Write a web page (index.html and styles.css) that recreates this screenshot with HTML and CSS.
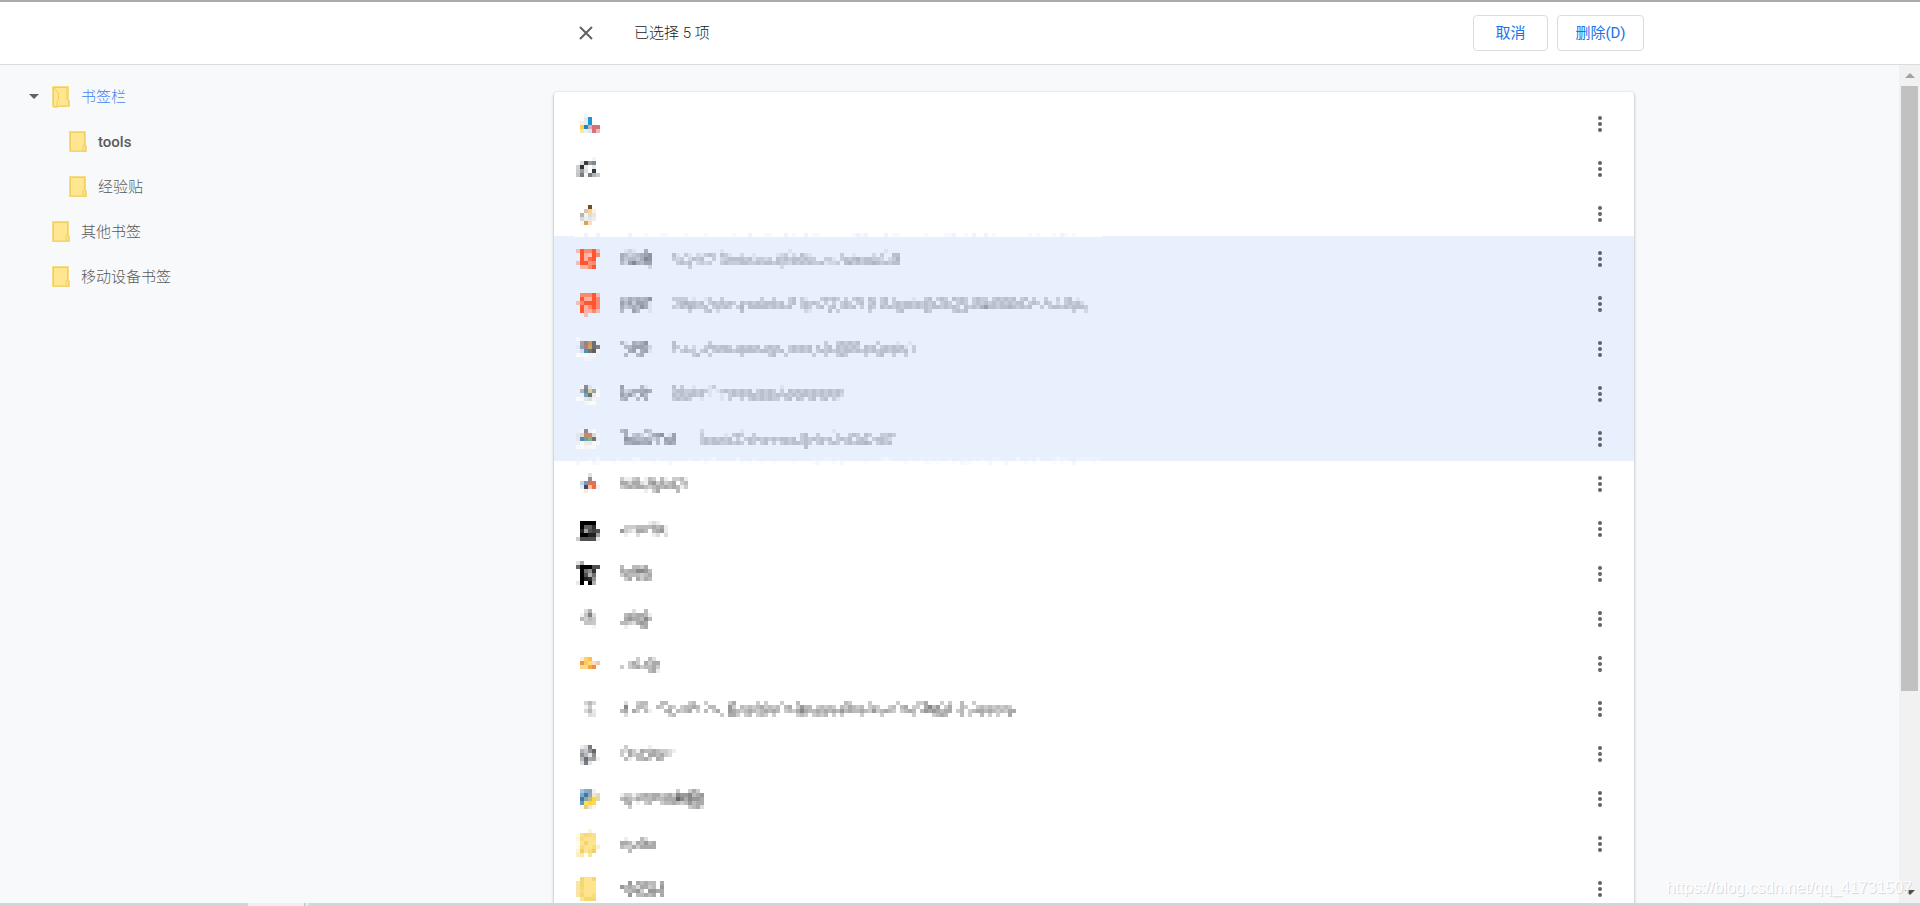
FILE: index.html
```html
<!DOCTYPE html>
<html lang="zh-CN">
<head>
<meta charset="utf-8">
<title>书签</title>
<link rel="stylesheet" href="styles.css">
</head>
<body>
<svg class="defs" aria-hidden="true">
  <symbol id="folder" viewBox="0 0 18 22">
    <path class="folder-halo" d="M0 0h17v14l1 1v6H0z"/>
    <path class="folder-face" d="M1.500 1.500h14v12.500l1 1v5h-15z"/>
    <rect class="folder-face" x="14" y="14" width="2.500" height="6" rx="1"/>
  </symbol>
  <symbol id="folder-open" viewBox="0 0 18 22">
    <path class="folder-halo" d="M0 0h17v13l1 1v7H6l-1 1H3l-3-1z"/>
    <path class="folder-face" d="M1.500 1.500h13.500v12l1.500 1.500v5h-15z"/>
    <path class="folder-face" d="M1.500 2l3.500 3 1.500 3v6l-1.500 1.500V20l-1 1-2.500-1.500z"/>
  </symbol>
</svg>
<header class="toolbar">
  <div class="toolbar-inner">
    <button class="icon-button close" aria-label="关闭">
      <svg width="14" height="14" viewBox="0 0 14 14" aria-hidden="true"><path d="M1 1l12 12M13 1L1 13"/></svg>
    </button>
    <span class="selection-count">已选择 5 项</span>
    <button class="action">取消</button>
    <button class="action">删除(D)</button>
  </div>
</header>
<div class="content">
  <nav class="tree" aria-label="文件夹">
    <a class="node current" href="#"><span class="arrow"></span><svg class="folder"><use href="#folder-open"/></svg>书签栏</a>
    <a class="node child latin" href="#"><span class="arrow none"></span><svg class="folder"><use href="#folder"/></svg>tools</a>
    <a class="node child" href="#"><span class="arrow none"></span><svg class="folder"><use href="#folder"/></svg>经验贴</a>
    <a class="node" href="#"><span class="arrow none"></span><svg class="folder"><use href="#folder"/></svg>其他书签</a>
    <a class="node" href="#"><span class="arrow none"></span><svg class="folder"><use href="#folder"/></svg>移动设备书签</a>
  </nav>
  <main class="list-area">
    <ul class="card" id="list"></ul>
  </main>
  <div class="scrollbar" aria-hidden="true">
    <span class="cap up"></span>
    <div class="track"><div class="thumb"></div></div>
    <span class="cap down"></span>
  </div>
</div>
<footer class="edge"><span class="edge-tab"></span><span class="edge-mark"></span></footer>
<div class="watermark">https://blog.csdn.net/qq_41731507</div>
<script src="script.js"></script>
</body>
</html>
```
FILE: styles.css
```css
* { box-sizing: border-box; }

body {
  margin: 0;
  height: 100vh;
  display: flex;
  flex-direction: column;
  overflow: hidden;
  position: relative;
  background: #f8f9fb;
  font: 15px/20px Roboto, "Noto Sans CJK SC", sans-serif;
  color: #5a5a5a;
}

button { font: inherit; background: none; border: 0; padding: 0; }

.defs { position: absolute; width: 0; height: 0; }
.folder-halo { fill: #f7dd86; }
.folder-face { fill: #ffe791; stroke: #f0cd5c; stroke-width: 1; }

.toolbar {
  flex: none;
  height: 65px;
  border-top: 2px solid #aba9ae;
  border-bottom: 1px solid #dadce0;
  background: #fff;
  padding: 0 21px 0 299px;
  display: flex;
}
.toolbar-inner {
  width: 100%;
  max-width: 1090px;
  margin: 0 auto;
  display: flex;
  align-items: center;
  gap: 9px;
}
.icon-button {
  flex: none;
  display: flex;
  align-items: center;
  justify-content: center;
  width: 44px;
  height: 36px;
}
.close { margin-left: 10px; }
.close path { stroke: #5f6368; stroke-width: 2; fill: none; }
.selection-count { flex: 1; padding-left: 17px; color: #202124; font-weight: 300; }
.action {
  height: 36px;
  padding: 0 17px;
  min-width: 75px;
  border: 1px solid #dadce0;
  border-radius: 4px;
  color: #1a73e8;
}
.action:last-child { min-width: 87px; }

.content { flex: 1; min-height: 0; display: flex; }

.tree { flex: none; width: 289px; padding-top: 9px; }
.node {
  display: flex;
  align-items: center;
  height: 45px;
  padding-left: 29px;
  color: #5a5a5a;
  font-weight: 300;
  text-decoration: none;
}
.node.latin { font-weight: 500; }
.node.child { padding-left: 46px; }
.node.current { color: #4285f4; }
.arrow {
  width: 10px;
  margin-right: 13px;
  border: 5px solid transparent;
  border-top-color: #5f6368;
  border-bottom: 0;
}
.arrow.none { visibility: hidden; }
.folder { width: 18px; height: 22px; margin-right: 11px; }

.list-area { flex: 1; min-width: 0; overflow: hidden; padding-top: 27px; }
.card {
  list-style: none;
  max-width: 1080px;
  margin: 0 auto;
  padding: 9px 0;
  background: #fff;
  border-radius: 4px;
  box-shadow: 0 1px 2px 0 rgba(60, 64, 67, .3), 0 1px 3px 1px rgba(60, 64, 67, .15);
}
.row {
  display: flex;
  align-items: center;
  height: 45px;
  padding: 0 12px 0 22px;
}
.row.selected { background: #e8effd; }
.mosaic { flex: 1; min-width: 0; height: 45px; overflow: visible; shape-rendering: crispEdges; }
.menu circle { fill: #5f6368; }

.scrollbar {
  flex: none;
  width: 21px;
  background: #f1f1f1;
  display: flex;
  flex-direction: column;
  align-items: center;
}
.cap { flex: none; display: flex; height: 21px; align-items: center; }
.cap::before { content: ""; border: 5px solid transparent; }
.up::before { border-top: 0; border-bottom-color: #a3a3a3; }
.down::before { border-bottom: 0; border-top-color: #505050; }
.track { flex: 1; width: 17px; }
.thumb { height: 76%; background: #c1c1c1; }

.edge { flex: none; height: 3px; background: #d0d7da; display: flex; padding-left: 248px; }
.edge-tab { width: 57px; background: #eeeff0; border-right: 1px solid #b9c2c4; }
.edge-mark { width: 4px; background: #e0e5e6; }

.watermark {
  position: absolute;
  right: 8px;
  bottom: 8px;
  font: 16px/20px "Liberation Sans", sans-serif;
  color: #fff;
  text-shadow: 1px 1px 0 #d8dadd;
}
```
FILE: script.js
```js
// Pixelated bookmark rows. Every cell is 4px; `icon` and `text` start at their
// own y inside the row. Icon cells are hex colours ("-" is empty), text cells
// are digits giving the ink strength in tenths ("." is empty).
const CELL = 4;

const rows = [
  { icon: [12, "- - f0f7fc", "- f9fcfe dceefa 1b95d3", "- fdf0cf e0eff5 1b95d3 fafafa", "- f9cf55 1b85c8 d9a9b9 d96f78 d96f78", "- fde5a0 eef1e4 d5e6f7 d96f78 eab8bf"] },
  { icon: [11, "- - - - f4f4f4", "- dcdcdf 3b3b44 98999d 85868b", "cfd0d2 2d3136 ececee - e4eae8", "cacbcf 9b9ca3 e0dede - 2f383a", "c4c7c9 777c80 f7f7f7 7a7e82 b0b4b7 c8cacb"] },
  { icon: [14, "- - - 6b4f2e", "- - d5c6b5 ffd08a fff0da", "- b5b5b6 f2f2f1 dddcd9 e6e6e5", "- dadada eeedeb e9e6e2 eeeeec", "- f8f8f8 d9a555 fcdfb5"] },
  { selected: true, edge: "top",
    icon: [13, "f0bdbb ff5530 f98a70 f98a70 ff5530 f4b5ad", "- ff5530 ffb0a0 ffc0b4 ff5530 f98a70", "- ff5530 ffb0a0 ff6a48 ff5530", "f0bdbb ff5530 ff5530 ff9078 f98a70", "- f4b5ad ffb0a0 f98a70 ff5530"],
    text: [
      [11, 13, ".121..5.", "54234567", "53443587", "42685466", ".......2"],
      [24, 13,
        "............1................1.......................1...",
        "41.31.21343.431..2..1.....123.2.421.......3..1....2.3..44",
        "323.2434..3.2344443413323.4343443433..331.34345344332.235",
        ".3434.2323..343334433434434332434343341223.45343445434344",
        "....3......................2............................."] ] },
  { selected: true,
    icon: [12, "- f98a70 f98a70 f98a70 ff5530 f4b5ad", "- ff5530 ffb0a0 ffb0a0 ff5530 f98a70", "f0bdbb f98a70 ff5530 ff5530 ff5530 f98a70", "- ff5530 ffb0a0 f98a70 ff5530 f98a70", "- ff5530 f4b5ad ffb0a0 f98a70 f4b5ad", "- - f0bdbb"],
    text: [
      [11, 16, "43545457", "64636651", "53454751", "4..64..1"],
      [24, 16,
        "3333.1..13..3.........3..3...34.31...34343.3.343.43.34.3....1..34.343.4343.3433.343434.34.3..3..3.34.1..",
        ".3454434.3434343.43434344434.34.34343.3.3.343.34.34.34.34344343434.343.343.3434343434344.343.43.2.34342.",
        "324354334.34343.35.44444343434..343.34.34.3434.3.43.43434344343434434343.43435744344543434..3.3443434443",
        "....3...34.2.....4...............21....4.3.......3......34.....43.....3434..........................3..2"] ] },
  { selected: true,
    icon: [11, "f2f6fe", "- a0a2a8 9b8083 c59a62 6e6e6e", "e3e8f2 8d9db4 b27a82 c4a75c 6e6e6e 808080", "- d5dde8 3d9bb8 707478 606060 f4f6fa", "fafbfd f8f8f8 fafafa f4f4f6 f6f6f6", "- - f0f4fd f0f4fd"],
    text: [
      [11, 15, "41.5457.", ".4466652", "..56.561", ".4..45.."],
      [24, 15,
        "4........3............................3..343434....3....1..1.",
        "43.3.2..3443443.343434.3434..343434.4.34.434343.434.3434341.3",
        "3.3433.34.343443444443443434.343434.34343434434343434434434.3",
        ".....34..3.......3......34..3......3..3..343....3..34..3..3.."] ] },
  { selected: true,
    icon: [14, "- f2f4f8 93888e dde2ea", "- b0b4bc 67889a d4cf9c a0a39d f4f5f7", "- eef2f7 78a3be 6e7479 e8eaee fafafa", "fafbfd f6f6f8 e6e6e6 dcdde0 f4f4f4", "- - f0f4fb fafafa fafafa"],
    text: [
      [11, 14, "6....41.", "52355565", "6463.64.", "45..4.5."],
      [24, 14,
        "4.3..1...13................1...............",
        "3443343431.134343434.34343.3.43434343434343",
        "43434434.1..1.34343443434343434344343434342",
        "34343..1....1.3..3.34343433.34.43.34.34.31."] ] },
  { selected: true, edge: "bottom",
    icon: [13, "- f4f5f8 93888e eef1f6 fafafa", "dfe5ea d8dade c98a68 c98a68 d9dcd0 f4f4f6", "e3e8ec 5c86b4 68a0a5 7fb48e 707474", "- f7f7f7 ececee e8e8ea fafafa f8f8f8", "fafafa fafafa f4f4f6 f8f8fa f8f8fa"],
    text: [
      [11, 13, "45....43......", ".5.342.2567.16", ".765445424.656", ".5566556.4.565"],
      [31, 13,
        "2.........1......................1...............",
        "3.....1.343..3...........34..3....3..343.43..3343",
        "34343434.3.3434343434434.34343434.3434.343.34432.",
        "34344334343.43.34.3.34344343.34.343.3434454.3434.",
        "..........................4......................"] ] },
  { icon: [12, "- - - e8e0df", "- - - 8f8f9e", "- c2d3e4 7a96b5 e07050 e8704c", "- e3e9ef 484668 f0c4a8 e8704c fbf0f0", "- - fdebd8"],
    text: [[11, 16, "31134.143.41.3341", "55355215635345.34", "34545543454545413", "......1.35....4.."]] },
  { icon: [15, "- 000000 000000 000000 000000", "- 000000 606060 606060 303030", "- 202020 a0a0a0 505050 404040 505050", "- 000000 000000 202020 202020 a0a0a0", "cccccc 505050 505050 505050 505050 e8e8e8"],
    text: [[11, 15, ".......121..", ".33344445451", "6321554.4561", ".1..2...12.2"]] },
  { icon: [10, "e4e4e4 a8a8a8", "686868 000000 000000 000000 505050 505050", "- 000000 707070 909090 303030", "- 000000 505050 b0b0b0 707070", "- 000000 202020 303030 909090", "e8e8e8 000000 - 000000 b0b0b0"],
    text: [[11, 14, "4..4435.", "54557764", "35444345", ".35.5354"]] },
  { icon: [13, "- - dcdcdc b0b0b0", "- f4f4f4 c4c4c4 808080 dcdcdc", "- b8b8b8 d0d0d0 b8b8b8 c8c8c8", "- - c4c4c4 c4c4c4 c8c8c8", "- - - - f4f4f4"],
    text: [[11, 13, "...2..4.", ".4545541", ".5655474", "4432565.", ".1...45."]] },
  { icon: [16, "- fdf0d8 ffd070 ffc040", "- ef9540 f9c868 ffd880 f8dcc0 f0c8a8", "- ffd880 ffd890 f4a840 ee9040"],
    text: [[11, 16, "....3..42.", "..353.5355", "3.34534453", ".......451"]] },
  { icon: [15, "- - d4d4d4 b8b8b8 d8d8d8", "- - f4f4f4 c8c8c8", "- - d8d8d8 b8b8b8 e8e8e8", "- - - dcdcdc e4e4e4"],
    text: [[11, 15,
      ".2..344...44.....34..3.....35.....3.3...3...4...........43....3......3....335...3.3..4..3..........",
      ".7..443..43.43.34454..44...63.4343453434.45.3644.34343.435434.343..34.45.33.5746.35..43..343434343.",
      "45.53.41...45.4345.3.4.35..6543454345454.3435754454545464544543634543.3454.46565455.34.345545434355",
      ".2..........34...........3.553.34.343.3.....343.3434.3.3....3....3.......3....3454...4.3..4.3.3..5."]] },
  { icon: [14, "- ececec d8dade 787c80", "- b0b2b6 c4c6c8 909498 62666c", "- 90949a b4b6ba e4e4e6 8c9094", "- b4b8bc 686c74 a4a8ac 9c9ea0 f0f0f0", "- dcdcde 787c80 e4e4e6"],
    text: [[11, 14, ".3.....1......", "32531544543321", "3.5344.554532.", ".41.4453.54..."]] },
  { icon: [13, "- a4c4e0 88acd0 8ca4b8 eef2f4", "- 80a8c8 4078a8 90a8b8 f0e8c0 e4dcb0", "- 4078a8 88a8b0 c0bc80 ffd43b e0d8a8", "- 6898c0 ffe050 ffd43b f8d860", "- fdf6e0 e0d080 e8e8e4 f8f8f8"],
    text: [[11, 13, "..............3..353.", "133134545534537667456", "454354445445559757665", ".45.1.34..34454346455", "..3..............3452"]] },
  { icon: [8, "- - - fcf4d8", "fefaec ffe08a f8d878 f8dc80 f8e090", "fdf6e0 f8dc80 ffe490 ffe490 ffe08a", "fefaec ffe490 f4d470 ffe490 ffe490 fefaec", "fefaec f8dc80 ffe490 ffe490 f8dc80 fcf0cc", "fdf4d8 f0d060 ffe490 f8dc80 f0d060", "fbeec4 f8e8b0 - f8e4a0"],
    text: [[11, 16, ".1...42..", "554154645", "433535555", "..4......"]] },
  { icon: [11, "- f4d870 ffe490 ffe490 f4d870", "f8e4a8 f4d870 ffe490 ffe490 ffe490", "f8e4a8 f4d870 ffe490 ffe490 ffe490", "f8e4a8 f8dc80 ffe490 ffe490 ffe490", "f8e4a8 f4d870 ffe490 ffe490 f8dc80", "- f8e4a0 f4d870 f4d870 f4d870"],
    text: [[11, 15, "..6.54544.5", "645425534.6", ".44563.6655", "..6.44545.5"]] },
];

const SVG = "http://www.w3.org/2000/svg";

function rect(svg, x, y, w, h, fill, opacity = 1) {
  const r = document.createElementNS(SVG, "rect");
  const attrs = { x, y, width: w, height: h, fill, "fill-opacity": opacity };
  for (const key in attrs) r.setAttribute(key, attrs[key]);
  svg.append(r);
}

function speckle(svg, y, fill, seed) {
  let n = seed;
  for (let i = 0; i < 131; i++) {
    n = (n * 1103 + 12345) % 65521;
    if (n % 10 < 3) rect(svg, i * CELL, y, CELL, CELL, fill, n % 2 ? 0.8 : 0.4);
  }
}

function drawMosaic(row) {
  const svg = document.createElementNS(SVG, "svg");
  svg.setAttribute("class", "mosaic");
  svg.setAttribute("aria-hidden", "true");
  if (row.edge === "top") {
    rect(svg, -2, -3, 528, CELL, "#fff");
    speckle(svg, -3, "#e8effd", 3);
  }
  if (row.edge === "bottom") {
    speckle(svg, 41, "#f4f8ff", 5);
    speckle(svg, 45, "#f0f5fe", 2);
  }
  const [top, ...lines] = row.icon;
  lines.forEach((line, j) => line.split(" ").forEach((c, i) => {
    if (c !== "-") rect(svg, i * CELL, top + j * CELL, CELL, CELL, "#" + c);
  }));
  (row.text || []).forEach(([col, y, ...cells], part) => cells.forEach((line, j) => {
    const ink = part ? "#606570" : row.selected ? "#505560" : "#333";
    [...line].forEach((d, i) => {
      if (d !== ".") rect(svg, (col + i) * CELL, y + j * CELL, CELL, CELL, ink, d / 12);
    });
  }));
  return svg;
}

const list = document.getElementById("list");
for (const row of rows) {
  const li = document.createElement("li");
  li.className = row.selected ? "row selected" : "row";
  li.append(drawMosaic(row));
  li.insertAdjacentHTML("beforeend",
    '<button class="icon-button menu" aria-label="更多操作"><svg width="6" height="16" viewBox="0 0 6 16" aria-hidden="true">' +
    '<circle cx="3" cy="2" r="2"/><circle cx="3" cy="8" r="2"/><circle cx="3" cy="14" r="2"/></svg></button>');
  list.append(li);
}
```
